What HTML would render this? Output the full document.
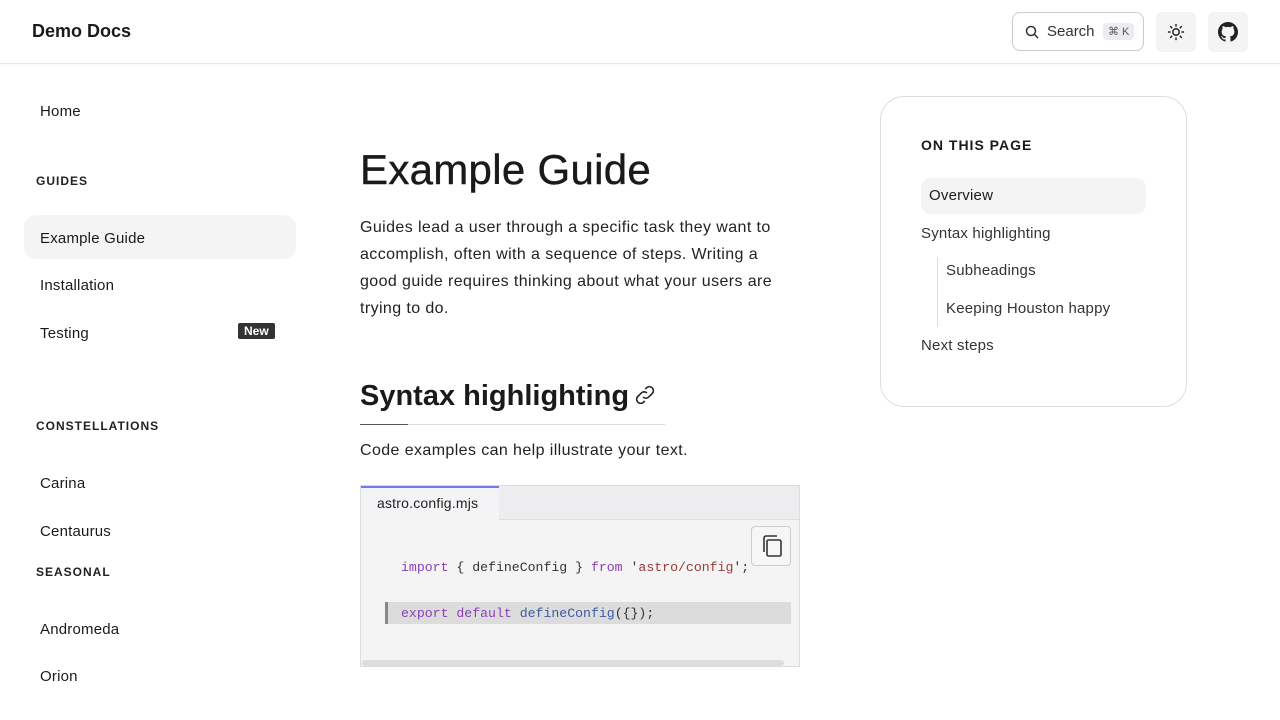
<!DOCTYPE html>
<html><head><meta charset="utf-8"><style>
*{box-sizing:border-box;margin:0;padding:0}
body{width:1280px;height:720px;overflow:hidden;background:#fff;font-family:"Liberation Sans",sans-serif;color:#1a1a1a;position:relative}
.hdr{position:absolute;left:0;top:0;width:1280px;height:64px;border-bottom:1px solid #e8e8e8;box-shadow:0 1px 3px rgba(0,0,0,.04)}
.logo{position:absolute;left:32px;top:21px;font-size:18px;font-weight:bold}
.search{position:absolute;left:1012px;top:12px;width:132px;height:39px;border:1px solid #ccc;border-radius:8px;font-size:15px}
.search span.t{position:absolute;left:34px;top:10px;color:#333}
.kbd{position:absolute;left:90px;top:10px;background:#ececf0;border-radius:4px;font-size:11px;padding:2px 5px;color:#555}
.ib{position:absolute;top:12px;width:40px;height:40px;background:#f4f4f4;border-radius:6px}
.nav a{position:absolute;left:40px;font-size:15px;color:#1a1a1a;letter-spacing:.2px}
.sec{position:absolute;left:36px;font-size:12px;font-weight:bold;letter-spacing:1px;color:#222}
.act{position:absolute;left:24px;top:215px;width:272px;height:44px;background:#f4f4f4;border-radius:12px}
.badge{position:absolute;left:238px;top:323px;background:#333;color:#fff;font-size:12px;font-weight:bold;padding:1px 6px;border-radius:2px}
h1{position:absolute;left:360px;top:146px;font-size:42px;font-weight:normal;letter-spacing:.3px;-webkit-text-stroke:.4px #1a1a1a}
.p{position:absolute;left:360px;font-size:16px;line-height:27px;color:#222;letter-spacing:.4px}
h2{position:absolute;left:360px;top:380px;font-size:29px;font-weight:bold;letter-spacing:0}
.code{position:absolute;left:360px;top:485px;width:440px;height:182px;background:#f4f4f4;border:1px solid #ddd}
.tabbar{height:34px;background:#ededf0;border-bottom:1px solid #ddd;position:relative}
.tab{position:absolute;left:0;top:0;width:138px;height:34px;background:#f4f4f6;border-top:2px solid #6d7af0;font-size:14px;padding:7px 16px;color:#222;letter-spacing:.2px}
pre{font-family:"Liberation Mono",monospace;font-size:13.2px;position:absolute;left:40px;color:#333}
.kw{color:#8a3fb5}.fn{color:#3d5aa0}.st{color:#9b3a3a}
.toc{position:absolute;left:880px;top:96px;width:307px;height:311px;border:1px solid #ddd;border-radius:24px}
.toc div{position:absolute;font-size:15px;color:#333;letter-spacing:.2px}
</style></head><body>
<div class="hdr">
<div class="logo">Demo Docs</div>
<div class="search"><svg style="position:absolute;left:12px;top:12px" width="14" height="14" viewBox="0 0 14 14" fill="none" stroke="#333" stroke-width="1.5"><circle cx="6" cy="6" r="4.5"/><path d="M9.5 9.5L13 13"/></svg><span class="t">Search</span><span class="kbd">⌘ K</span></div>
<div class="ib" style="left:1156px"><svg style="position:absolute;left:11px;top:11px" width="18" height="18" viewBox="0 0 18 18" fill="none" stroke="#222" stroke-width="1.5" stroke-linecap="round"><circle cx="9" cy="9" r="3.2"/><path d="M9 1.5v1.5M9 15v1.5M1.5 9H3M15 9h1.5M3.7 3.7l1 1M13.3 13.3l1 1M3.7 14.3l1-1M13.3 4.7l1-1"/></svg></div>
<div class="ib" style="left:1208px"><svg style="position:absolute;left:10px;top:10px" width="20" height="20" viewBox="0 0 16 16" fill="#222"><path d="M8 0C3.58 0 0 3.58 0 8c0 3.540 2.29 6.53 5.47 7.59.4.07.55-.17.55-.38v-1.33c-2.23.48-2.7-1.07-2.7-1.07-.36-.92-.89-1.17-.89-1.170-.73-.5.05-.49.05-.49.8.06 1.23.83 1.23.83.71 1.22 1.87.87 2.33.66.07-.52.28-.87.5-1.07-1.78-.2-3.64-.89-3.64-3.95 0-.87.31-1.59.82-2.15-.08-.2-.36-1.02.08-2.12 0 0 .67-.21 2.2.82a7.6 7.6 0 014 0c1.53-1.04 2.2-.82 2.2-.82.44 1.1.16 1.92.08 2.12.51.56.82 1.27.82 2.15 0 3.07-1.87 3.75-3.650 3.95.29.25.54.73.54 1.48v2.2c0 .21.15.46.55.38A8.01 8.01 0 0016 8c0-4.42-3.58-8-8-8z"/></svg></div>
</div>
<div class="nav">
<a style="top:103px">Home</a>
<div class="sec" style="top:174px">GUIDES</div>
<div class="act"></div>
<a style="top:230px">Example Guide</a>
<a style="top:277px">Installation</a>
<a style="top:325px">Testing</a><span class="badge">New</span>
<div class="sec" style="top:419px">CONSTELLATIONS</div>
<a style="top:475px">Carina</a>
<a style="top:523px">Centaurus</a>
<div class="sec" style="top:565px">SEASONAL</div>
<a style="top:621px">Andromeda</a>
<a style="top:668px">Orion</a>
</div>
<h1>Example Guide</h1>
<div class="p" style="top:214px;width:440px">Guides lead a user through a specific task they want to accomplish, often with a sequence of steps. Writing a good guide requires thinking about what your users are trying to do.</div>
<h2>Syntax highlighting<svg width="24" height="24" viewBox="0 0 24 24" fill="none" stroke="#222" stroke-width="1.6" style="vertical-align:-2px;margin-left:4px"><path d="M10 14a4 4 0 005.7 0l3.5-3.5a4 4 0 00-5.7-5.7l-1.2 1.2M14 10a4 4 0 00-5.7 0l-3.5 3.5a4 4 0 005.7 5.7l1.2-1.2"/></svg></h2>
<div style="position:absolute;left:360px;top:424px;width:305px;height:1px;background:#ddd"></div>
<div style="position:absolute;left:360px;top:424px;width:48px;height:1px;background:#555"></div>
<div class="p" style="top:437px">Code examples can help illustrate your text.</div>
<div class="code"><div class="tabbar"><div class="tab">astro.config.mjs</div></div>
<div style="position:absolute;left:390px;top:40px;width:40px;height:40px;border:1px solid #ccc;border-radius:4px;background:#f6f6f6"><svg style="position:absolute;left:8px;top:7px" width="24" height="24" viewBox="0 0 24 24" fill="none" stroke="#333" stroke-width="1.6"><rect x="7" y="6" width="14" height="16" rx="1.5"/><path d="M4 18V4a2 2 0 012-2h11"/></svg></div>
<pre style="top:74px"><span class="kw">import</span> { defineConfig } <span class="kw">from</span> '<span class="st">astro/config</span>';</pre>
<div style="position:absolute;left:24px;top:116px;width:406px;height:22px;background:#dcdcdc;border-left:3px solid #888"></div>
<pre style="top:120px"><span class="kw">export default</span> <span class="fn">defineConfig</span>({});</pre>
<div style="position:absolute;left:1px;top:174px;width:422px;height:6px;background:#ddd;border-radius:3px"></div>
</div>
<div class="toc">
<div style="left:40px;top:40px;font-size:14px;font-weight:bold;letter-spacing:1px;color:#1a1a1a">ON THIS PAGE</div>
<div style="left:40px;top:81px;width:225px;height:36px;background:#f4f4f4;border-radius:10px"></div>
<div style="left:48px;top:90px;color:#1a1a1a">Overview</div>
<div style="left:40px;top:128px">Syntax highlighting</div>
<div style="left:56px;top:160px;width:1px;height:70px;background:#ddd"></div>
<div style="left:65px;top:165px">Subheadings</div>
<div style="left:65px;top:203px">Keeping Houston happy</div>
<div style="left:40px;top:240px">Next steps</div>
</div>
</body></html>
